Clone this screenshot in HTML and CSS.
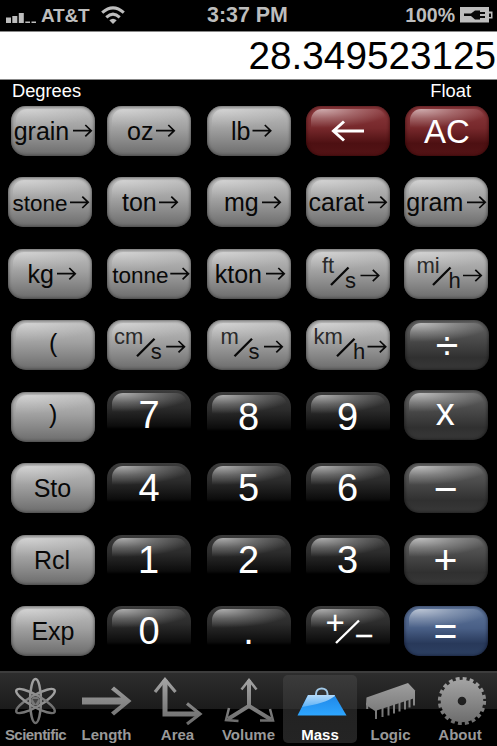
FILE: index.html
```html
<!DOCTYPE html>
<html lang="en">
<head>
<meta charset="utf-8">
<title>Calculator</title>
<link rel="stylesheet" href="styles.css">
</head>
<body>
<svg class="defs" width="0" height="0" aria-hidden="true">
  <defs>
    <path id="arrow" d="M0 0H18M12.3 -5.7L18.2 0L12.3 5.7"/>
    <path id="slash" d="M0 17.5L17.5 0"/>
    <linearGradient id="metal" gradientUnits="userSpaceOnUse" x1="0" y1="677" x2="0" y2="725">
      <stop offset="0" stop-color="#a6a6a6"/><stop offset="1" stop-color="#6a6a6a"/>
    </linearGradient>
    <linearGradient id="blue" x1="0" y1="0" x2="0" y2="1">
      <stop offset="0" stop-color="#1f87e8"/><stop offset="1" stop-color="#2ea6ff"/>
    </linearGradient>
    <linearGradient id="shine" x1="0" y1="0" x2="0" y2="1">
      <stop offset="0" stop-color="#b4dafa"/><stop offset="1" stop-color="#5eb2f6"/>
    </linearGradient>
  </defs>
</svg>
<header class="status">
  <div class="carrier">
    <svg class="signal" width="30" height="11" viewBox="0 0 30 11"><path d="M0 4.500h5v5.500H0zM6.300 3h5v7h-5zM12.800 0h5v10h-5zM19.300 8.500h4.700V10h-4.700zM25.500 8.500H30V10h-4.500z"/></svg>
    <span class="network">AT&amp;T</span>
    <svg class="wifi" width="24" height="18" viewBox="0 0 24 18"><g fill="none" stroke-width="3"><path d="M1.200 6.700Q12 -3 22.800 6.700"/><path d="M5.300 11.300Q12 5 18.700 11.300"/></g><path class="dot" d="M8.300 14.300Q12 11 15.700 14.300L12 18z"/></svg>
  </div>
  <div class="clock">3:37 PM</div>
  <div class="power">
    <span>100%</span>
    <svg class="battery" width="33" height="16" viewBox="0 0 33 16"><path class="cell" d="M0 0H29V4.500H32.500V11.500H29V15.500H0z"/><path class="plug" d="M4 6.500H11L15 3.500H20V5H25V7H20V9H25V11H20V12.500H15L11 9H4z"/><path class="plug" d="M29 6.500h2v3.500h-2z"/></svg>
  </div>
</header>
<output class="display">28.349523125</output>
<div class="modes"><span>Degrees</span><span>Float</span></div>
<main class="keypad">
  <button class="key light"><svg viewBox="0 0 84 50"><text x="2.700" y="33.700">grain</text><use href="#arrow" x="62" y="24.700"/></svg></button>
  <button class="key light"><svg viewBox="0 0 84 50"><text x="20" y="33.700">oz</text><use href="#arrow" x="49" y="24.700"/></svg></button>
  <button class="key light"><svg viewBox="0 0 84 50"><text x="24" y="33.700">lb</text><use href="#arrow" x="45.500" y="24.700"/></svg></button>
  <button class="key red"><svg viewBox="0 0 84 50"><path class="back" d="M58 25H27.500M38 15.500L27.500 25L38 34.500"/></svg></button>
  <button class="key red in"><svg viewBox="0 0 84 50"><text class="clear" x="42" y="36.500">AC</text></svg></button>

  <button class="key light out"><svg viewBox="0 0 84 50"><text class="small" x="4.500" y="33.700">stone</text><use href="#arrow" x="62" y="25.300"/></svg></button>
  <button class="key light"><svg viewBox="0 0 84 50"><text x="15" y="33.700">ton</text><use href="#arrow" x="52" y="25.300"/></svg></button>
  <button class="key light"><svg viewBox="0 0 84 50"><text x="17" y="33.700">mg</text><use href="#arrow" x="55" y="25.300"/></svg></button>
  <button class="key light"><svg viewBox="0 0 84 50"><text x="2.500" y="33.700">carat</text><use href="#arrow" x="62" y="25.300"/></svg></button>
  <button class="key light"><svg viewBox="0 0 84 50"><text x="2.300" y="33.700">gram</text><use href="#arrow" x="63" y="25.300"/></svg></button>

  <button class="key light out"><svg viewBox="0 0 84 50"><text x="19.500" y="33.700">kg</text><use href="#arrow" x="49" y="24.700"/></svg></button>
  <button class="key light"><svg viewBox="0 0 84 50"><text class="small" x="5.300" y="33.700">tonne</text><use href="#arrow" x="63.300" y="24.700"/></svg></button>
  <button class="key light"><svg viewBox="0 0 84 50"><text x="7.700" y="33.700">kton</text><use href="#arrow" x="59" y="24.700"/></svg></button>
  <button class="key light"><svg viewBox="0 0 84 50"><text class="unit" x="16" y="23.500">ft</text><use class="over" href="#slash" x="25" y="18.500"/><text class="unit low" x="39" y="38.700">s</text><use href="#arrow" x="54.500" y="26.500"/></svg></button>
  <button class="key light"><svg viewBox="0 0 84 50"><text class="unit" x="12.500" y="23.500">mi</text><use class="over" href="#slash" x="29" y="18.500"/><text class="unit low" x="44.500" y="38.700">h</text><use href="#arrow" x="59" y="26.500"/></svg></button>

  <button class="key light"><svg viewBox="0 0 84 50"><text x="38" y="31.500">(</text></svg></button>
  <button class="key light"><svg viewBox="0 0 84 50"><text class="unit" x="7" y="23.700">cm</text><use class="over" href="#slash" x="30" y="18.800"/><text class="unit low" x="43.700" y="39">s</text><use href="#arrow" x="59.200" y="26.700"/></svg></button>
  <button class="key light"><svg viewBox="0 0 84 50"><text class="unit" x="13.500" y="23.700">m</text><use class="over" href="#slash" x="27.500" y="18.800"/><text class="unit low" x="41.500" y="39">s</text><use href="#arrow" x="57" y="26.700"/></svg></button>
  <button class="key light"><svg viewBox="0 0 84 50"><text class="unit" x="7.500" y="23.700">km</text><use class="over" href="#slash" x="31" y="18.800"/><text class="unit low" x="47" y="39">h</text><use href="#arrow" x="61.500" y="26.700"/></svg></button>
  <button class="key gray in"><svg viewBox="0 0 84 50"><text class="sign" x="42" y="39.300">÷</text></svg></button>

  <button class="key light"><svg viewBox="0 0 84 50"><text x="38" y="30.500">)</text></svg></button>
  <button class="key black up"><svg viewBox="0 0 84 50"><text class="digit" x="42" y="38.300">7</text></svg></button>
  <button class="key black"><svg viewBox="0 0 84 50"><text class="digit" x="41.500" y="38">8</text></svg></button>
  <button class="key black"><svg viewBox="0 0 84 50"><text class="digit" x="41.500" y="38">9</text></svg></button>
  <button class="key gray up"><svg viewBox="0 0 84 50"><text class="digit" x="41.300" y="34.800">x</text></svg></button>

  <button class="key light"><svg viewBox="0 0 84 50"><text x="22.700" y="33.700">Sto</text></svg></button>
  <button class="key black"><svg viewBox="0 0 84 50"><text class="digit" x="42" y="38">4</text></svg></button>
  <button class="key black"><svg viewBox="0 0 84 50"><text class="digit" x="41.500" y="38">5</text></svg></button>
  <button class="key black"><svg viewBox="0 0 84 50"><text class="digit" x="41.500" y="38">6</text></svg></button>
  <button class="key gray"><svg viewBox="0 0 84 50"><text class="sign" x="41.700" y="39.500">−</text></svg></button>

  <button class="key light"><svg viewBox="0 0 84 50"><text x="22.900" y="33.700">Rcl</text></svg></button>
  <button class="key black"><svg viewBox="0 0 84 50"><text class="digit" x="41.500" y="38">1</text></svg></button>
  <button class="key black"><svg viewBox="0 0 84 50"><text class="digit" x="41.500" y="38">2</text></svg></button>
  <button class="key black"><svg viewBox="0 0 84 50"><text class="digit" x="41.500" y="38">3</text></svg></button>
  <button class="key gray"><svg viewBox="0 0 84 50"><text class="sign" x="41.500" y="38.800">+</text></svg></button>

  <button class="key light"><svg viewBox="0 0 84 50"><text x="20.400" y="33.700">Exp</text></svg></button>
  <button class="key black"><svg viewBox="0 0 84 50"><text class="digit" x="42" y="38">0</text></svg></button>
  <button class="key black"><svg viewBox="0 0 84 50"><text class="digit" x="41.500" y="38">.</text></svg></button>
  <button class="key black"><svg viewBox="0 0 84 50"><text class="half" x="29.200" y="28">+</text><path class="divide" d="M30 37L53 14.500"/><text class="half" x="57.800" y="41.300">−</text></svg></button>
  <button class="key navy"><svg viewBox="0 0 84 50"><text class="sign" x="41.500" y="39.300">=</text></svg></button>
</main>
<nav class="tabs">
  <a class="tab tight"><svg viewBox="0 674 71 55"><g fill="none" stroke="url(#metal)" stroke-width="2.500"><ellipse cx="35.500" cy="701" rx="5.500" ry="22"/><ellipse cx="35.500" cy="701" rx="5.800" ry="22" transform="rotate(60 35.500 701)"/><ellipse cx="35.500" cy="701" rx="5.800" ry="22" transform="rotate(-60 35.500 701)"/></g><circle cx="35.500" cy="701" r="4.500" fill="#777"/><path d="M32.500 699h6l-3 5z" fill="#444"/></svg><span>Scientific</span></a>
  <a class="tab"><svg viewBox="71 674 71 55"><path fill="url(#metal)" d="M82 697.500H121L111 689.500L114 686.500L131.500 701L114 715.500L111 712.500L121 704.500H82z"/></svg><span>Length</span></a>
  <a class="tab"><svg viewBox="142 674 71 55"><g fill="none" stroke="url(#metal)"><path stroke-width="5" d="M165 680V714H198"/><path stroke-width="3.200" d="M155 692L165 679.500L175.500 692M187 703.500L200 714L187 724"/></g></svg><span>Area</span></a>
  <a class="tab"><svg viewBox="213 674 71 55"><g fill="none" stroke="url(#metal)"><path stroke-width="4" d="M249 680V706L228 719M249 706L271 719.500"/><path stroke-width="2.500" d="M241.500 689.500L249 680L256.500 689.500M229 708L226 720L238.500 721M270 709L273 720.500L260 720.500"/></g></svg><span>Volume</span></a>
  <a class="tab active"><svg viewBox="284 674 71 55"><path d="M315 695V694C315 686.500 326.500 686.500 326.500 694V695" fill="none" stroke="#a2c9e8" stroke-width="2"/><path d="M307 695H333.500L345.500 715.500H296.500z" fill="url(#blue)"/><path d="M307 695H333.500L334 696C326 702 316 704.500 301 707z" fill="url(#shine)"/></svg><span>Mass</span></a>
  <a class="tab"><svg viewBox="355 674 71 55"><path fill="url(#metal)" d="M366.500 697.500L408 683L415 690.500V698L375 711L366 705z"/><path fill="none" stroke="url(#metal)" stroke-width="2" d="M367.200 703V709M376 709V719M382.500 707V717M388.500 705V715.500M394 703V713.500M399.500 702V711.500M405 700V709.500M409.500 698V707.500M414 696V705.500"/></svg><span>Logic</span></a>
  <a class="tab last"><svg viewBox="426 674 71 55"><g fill="none" stroke="url(#metal)"><circle cx="462" cy="701" r="12.800" stroke-width="17"/><circle cx="462" cy="701" r="22.300" stroke-width="3.600" stroke-dasharray="3.900 3.106"/></g></svg><span>About</span></a>
</nav>
</body>
</html>
```
FILE: styles.css
```css
* { box-sizing: border-box; }
body {
  margin: 0;
  width: 497px;
  height: 746px;
  overflow: hidden;
  background: #000;
  color: #fff;
  font-family: "Liberation Sans", Arial, sans-serif;
  display: flex;
  flex-direction: column;
}
.defs { position: absolute; }
.status {
  height: 31px;
  flex: none;
  display: grid;
  grid-template-columns: 1fr 90px 1fr;
  color: #bdbdbd;
  font-weight: bold;
  line-height: 31px;
}
.carrier, .power { display: flex; align-items: center; font-size: 19px; }
.carrier { padding-left: 6px; }
.signal { fill: #bdbdbd; margin-top: 5px; }
.network { margin-left: 5px; letter-spacing: -.2px; }
.wifi { margin-left: 12px; margin-top: -1px; stroke: #bdbdbd; }
.wifi .dot { fill: #bdbdbd; stroke: none; }
.clock { font-size: 21.4px; text-align: center; white-space: nowrap; margin-left: -2px; }
.power { justify-content: flex-end; padding-right: 4px; }
.power span { font-size: 19.5px; }
.battery { margin-left: 5px; margin-top: -2px; }
.cell { fill: #bdbdbd; }
.plug { fill: #080808; }
.display {
  display: block;
  height: 49px;
  flex: none;
  background: #fff;
  border: solid #888;
  border-width: 1px 0;
  color: #000;
  font-size: 38.7px;
  line-height: 47px;
  text-align: right;
  padding: 0 1px 0 0;
}
.modes {
  height: 26px;
  flex: none;
  display: flex;
  justify-content: space-between;
  padding: 0 26px 0 12px;
  font-size: 18.3px;
  line-height: 21px;
}
.keypad {
  flex: none;
  height: 565px;
  display: grid;
  grid-template-columns: 96px 100px 99px 98px 84px;
  grid-template-rows: 71px 72px 71px 72px 71px 72px 71px 50px;
  padding-left: 11px;
}
.key {
  position: relative;
  width: 84px;
  height: 50px;
  padding: 0;
  border: 0;
  border-radius: 15px;
  color: #fff;
  font-family: inherit;
}
.key.in { margin-left: 1px; }
.key.out { margin-left: -3px; }
.key.up { margin-top: -2px; }
.key::before {
  content: "";
  position: absolute;
  left: 5px;
  right: 4px;
  top: 3px;
  height: 22px;
  border-radius: 11px 11px 0 0;
  background: radial-gradient(ellipse 72px 19px at 10px 0, rgba(255,255,255,.58), rgba(255,255,255,.25) 50%, rgba(255,255,255,0));
}
.key svg { position: relative; display: block; width: 84px; height: 50px; overflow: visible; }
.key text { fill: currentColor; font-size: 25px; }
.key use { fill: none; stroke: currentColor; stroke-width: 1.7; }
.key .over { stroke-width: 2.3; }
.key .small { font-size: 22.5px; }
.key .unit { font-size: 22px; fill: #2a2a2a; }
.key .low { fill: #111; }
.key .digit { font-size: 38px; text-anchor: middle; }
.key .sign { font-size: 41px; text-anchor: middle; }
.key .half { font-size: 33px; text-anchor: middle; }
.key .clear { font-size: 33px; text-anchor: middle; }
.back { fill: none; stroke: #fff; stroke-width: 3; }
.divide { stroke: #fff; stroke-width: 2.4; }
.light {
  color: #080808;
  background: linear-gradient(#c2c2c2, #a0a0a0 45%, #6b6b6b);
  box-shadow: inset 0 0 3px 1px rgba(50,50,50,.6);
}
.light::before { opacity: .55; }
.red { background: linear-gradient(#8d3a3e, #76282b 45%, #4d1012 75%, #541416); box-shadow: inset 0 0 3px 1px rgba(40,0,0,.5); }
.gray { background: linear-gradient(#666, #464646 45%, #303030 75%, #383838); box-shadow: inset 0 0 3px 1px rgba(0,0,0,.4); }
.navy { background: linear-gradient(#60779c, #495f86 45%, #28395a 75%, #2d4062); box-shadow: inset 0 0 3px 1px rgba(0,0,20,.4); }
.black { background: linear-gradient(#3c3c3c, #2c2c2c 35%, #0c0c0c 72%, #000 78%); }
.tabs {
  flex: none;
  height: 75px;
  display: grid;
  grid-template-columns: repeat(7, 71px);
  border-top: 2px solid #3d3d3d;
  background: linear-gradient(#2d2d2d, #1b1b1b 36px, #000 36px);
}
.tab {
  display: flex;
  flex-direction: column;
  align-items: center;
  color: #999;
  font-size: 15px;
  font-weight: bold;
  line-height: 17px;
}
.tab svg { width: 71px; height: 55px; margin-top: 1px; overflow: visible; flex: none; }
.tab span { margin-top: -3px; }
.tight span { letter-spacing: -.55px; }
.last span { margin-left: -3px; }
.active {
  color: #fff;
  margin: 2px -2px 3px -1px;
  border-radius: 5px;
  background: linear-gradient(#3b3b3b, #2d2d2d 34px, #222 34px, #242424);
}
.active svg { margin-top: -1px; }
```
